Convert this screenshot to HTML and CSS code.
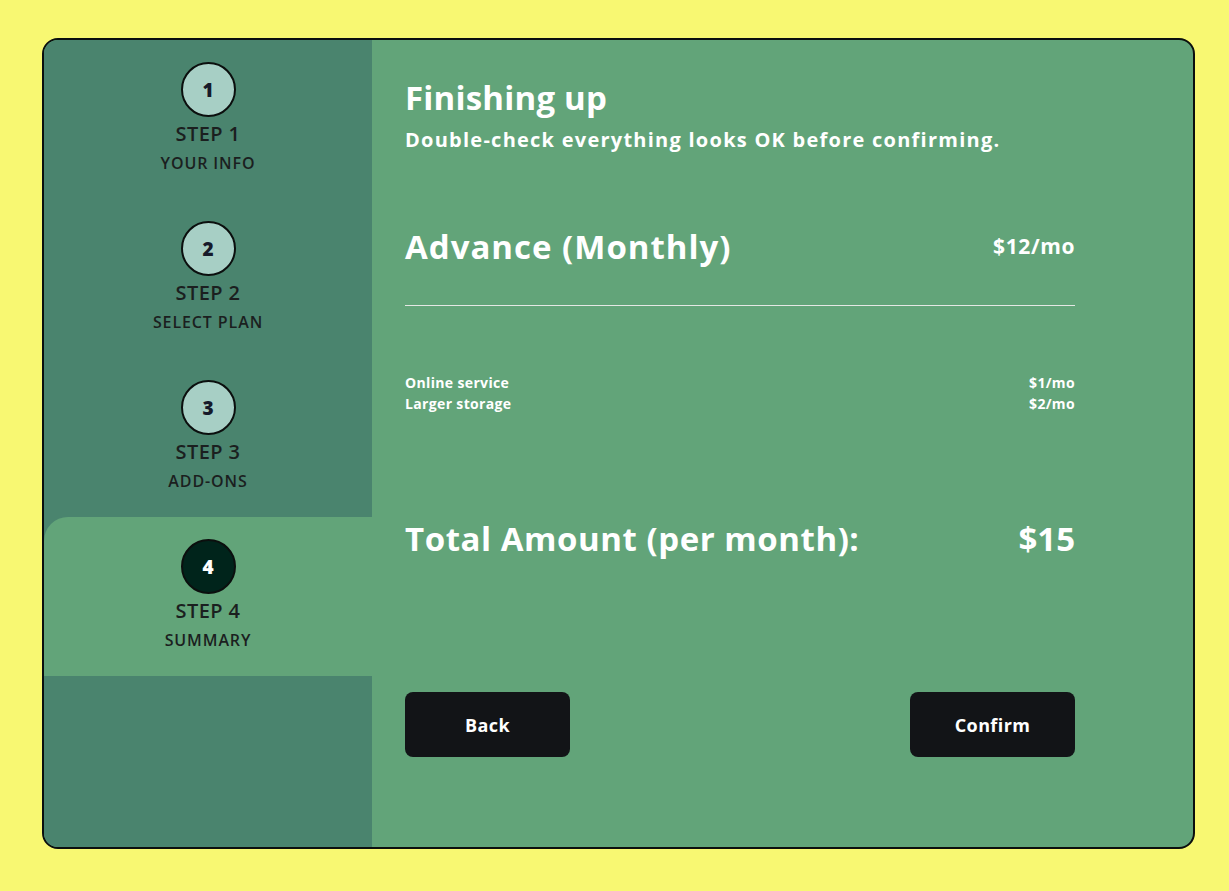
FILE: index.html
```html
<!DOCTYPE html>
<html lang="en">
<head>
<meta charset="utf-8">
<title>Finishing up</title>
<link rel="stylesheet" href="styles.css">
</head>
<body>
<div class="card">
  <aside class="sidebar">
    <div class="step">
      <div class="num">1</div>
      <div class="step-title">STEP 1</div>
      <div class="step-label">YOUR INFO</div>
    </div>
    <div class="step">
      <div class="num">2</div>
      <div class="step-title">STEP 2</div>
      <div class="step-label">SELECT PLAN</div>
    </div>
    <div class="step">
      <div class="num">3</div>
      <div class="step-title">STEP 3</div>
      <div class="step-label">ADD-ONS</div>
    </div>
    <div class="step active">
      <div class="num">4</div>
      <div class="step-title">STEP 4</div>
      <div class="step-label">SUMMARY</div>
    </div>
  </aside>
  <main class="main">
    <h1 class="title">Finishing up</h1>
    <p class="subtitle">Double-check everything looks OK before confirming.</p>
    <div class="plan-row">
      <span class="plan-name">Advance (Monthly)</span>
      <span class="plan-price">$12/mo</span>
    </div>
    <hr class="divider">
    <div class="addons">
      <div class="addon"><span>Online service</span><span>$1/mo</span></div>
      <div class="addon"><span>Larger storage</span><span>$2/mo</span></div>
    </div>
    <div class="total-row">
      <span>Total Amount (per month):</span>
      <span class="total-price">$15</span>
    </div>
    <div class="buttons">
      <button class="btn">Back</button>
      <button class="btn">Confirm</button>
    </div>
  </main>
</div>
</body>
</html>
```
FILE: styles.css
```css
* { box-sizing: border-box; }
body {
  margin: 0;
  background: #f8f872;
  font-family: "Open Sans", "Noto Sans", sans-serif;
  width: 1229px;
  height: 891px;
  overflow: hidden;
}
.card {
  margin: 38px 0 0 42px;
  width: 1153px;
  height: 811px;
  border: 2px solid #0b0f0e;
  border-radius: 16px;
  overflow: hidden;
  display: flex;
  background: #62a479;
}
.sidebar {
  width: 328px;
  background: #4a846e;
  display: flex;
  flex-direction: column;
}
.step {
  height: 159px;
  padding-top: 22px;
  display: flex;
  flex-direction: column;
  align-items: center;
  color: #1b1f1f;
}
.step.active {
  background: #62a479;
  border-top-left-radius: 24px;
}
.num {
  width: 55px;
  height: 55px;
  border: 2px solid #0b0f0e;
  border-radius: 50%;
  background: #a7cfc5;
  display: flex;
  align-items: center;
  justify-content: center;
  font-weight: 800;
  font-size: 19px;
  color: #161a2a;
}
.active .num {
  background: #00241b;
  color: #ffffff;
}
.step-title {
  margin-top: 2px;
  font-size: 20px;
  font-weight: 600;
  line-height: 30px;
  letter-spacing: 0.4px;
}
.step-label {
  font-size: 16px;
  font-weight: 600;
  line-height: 24px;
  margin-top: 2px;
  letter-spacing: 0.9px;
}
.main {
  flex: 1;
  padding: 34px 0 0 33px;
  color: #ffffff;
}
.main > * { width: 670px; }
.title {
  margin: 0;
  font-size: 33px;
  font-weight: 700;
  line-height: 48px;
  letter-spacing: 0.2px;
}
.subtitle {
  margin: 3px 0 0;
  font-size: 20px;
  font-weight: 700;
  line-height: 30px;
  letter-spacing: 1.25px;
}
.plan-row {
  margin-top: 67px;
  display: flex;
  justify-content: space-between;
  align-items: center;
  height: 48px;
}
.plan-name {
  font-size: 33px;
  font-weight: 700;
  letter-spacing: 1px;
}
.plan-price {
  font-size: 21px;
  font-weight: 700;
  letter-spacing: 0.6px;
}
.divider {
  margin: 35px 0 0;
  border: 0;
  height: 1px;
  background: #e4e7e4;
}
.addons {
  margin-top: 66px;
  font-size: 14px;
  font-weight: 700;
  line-height: 21px;
  letter-spacing: 0.35px;
}
.addon {
  display: flex;
  justify-content: space-between;
}
.total-row {
  margin-top: 100px;
  height: 48px;
  display: flex;
  justify-content: space-between;
  align-items: center;
  font-size: 33px;
  font-weight: 700;
  letter-spacing: 0.55px;
}
.total-price { letter-spacing: 0; }
.buttons {
  margin-top: 130px;
  display: flex;
  justify-content: space-between;
}
.btn {
  width: 165px;
  height: 65px;
  border: 0;
  border-radius: 8px;
  background: #121417;
  color: #ffffff;
  font-family: inherit;
  font-size: 18px;
  font-weight: 700;
  letter-spacing: 0.4px;
}
```
